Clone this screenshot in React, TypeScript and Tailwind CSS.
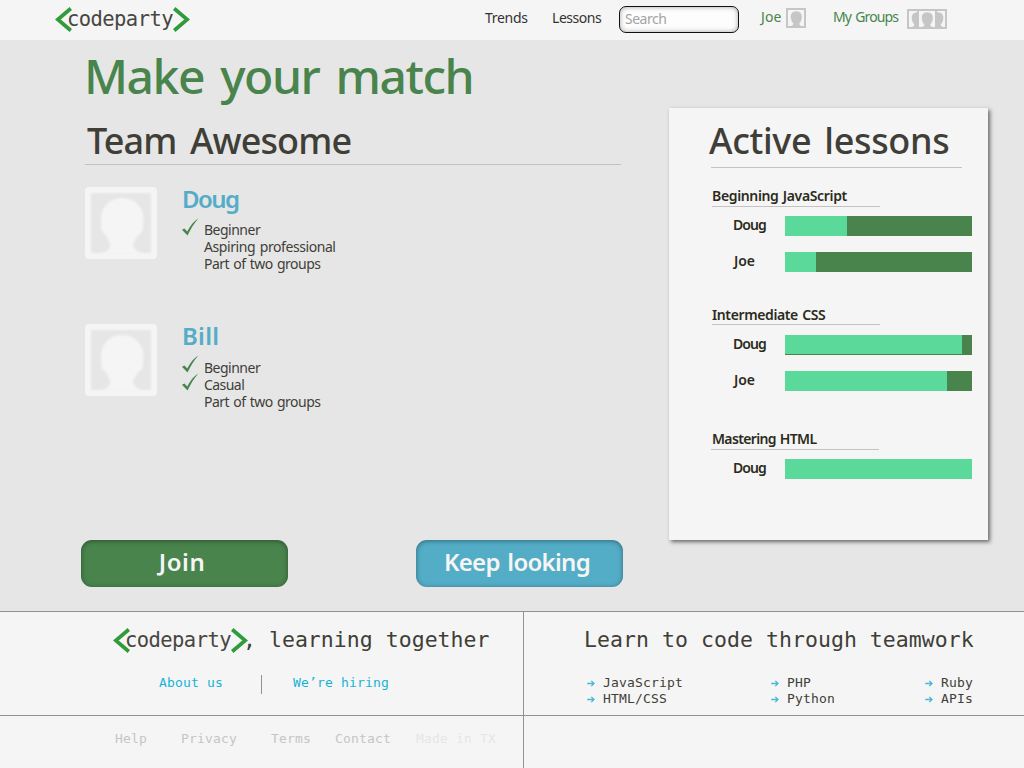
import React from "react";

function Logo() {
  return (
    <div className="flex h-[25px] w-[134px] shrink-0 items-start" aria-label="codeparty">
      <svg className="h-[25px] w-[17px] shrink-0" viewBox="0 0 17 25" fill="none" stroke="#2f9b3a" strokeWidth="3.7">
        <path d="M15.8 1.5 L2.8 12.5 L15.8 23.5" />
      </svg>
      <span className="-ml-[5px] w-[106px] shrink-0 whitespace-nowrap font-['DejaVu_Sans_Mono',monospace] text-[20.5px] leading-[25px] tracking-[-0.57px] text-[#47463f]">
        codeparty
      </span>
      <svg className="h-[25px] w-[17px] shrink-0" viewBox="0 0 17 25" fill="none" stroke="#2f9b3a" strokeWidth="3.7">
        <path d="M1.2 1.5 L14.2 12.5 L1.2 23.5" />
      </svg>
    </div>
  );
}

function Avatar({ id }: { id: string }) {
  return (
    <svg className="mt-1 size-[72px] shrink-0" viewBox="0 0 72 72">
      <defs>
        <filter id={id} x="-10%" y="-10%" width="120%" height="120%">
          <feGaussianBlur stdDeviation="1" />
        </filter>
      </defs>
      <rect width="72" height="72" rx="4" fill="#f5f5f5" />
      <rect x="6" y="6" width="60" height="60" fill="#e6e6e6" filter={`url(#${id})`} />
      <path
        d="M13 67 C21 66 26 62 25 57 C24 54 22 51 21 48 C17 46 15.5 41 16.5 37 C13.5 22 24 11 37 11 C51 11 61 23 58 37 C59 42 57 47 53 48 C52 51 49 54 48 57 C48 62 53 66 60 67 Z"
        fill="#f5f5f5"
        filter={`url(#${id})`}
      />
    </svg>
  );
}

const BUST = "M4.5 18 C6.5 17.6 7.3 16.8 7.3 15.4 C5.8 13.6 5.2 12 5 10.4 C4 6.4 6.2 3.2 10.3 3.2 C14.4 3.2 16.6 6.4 15.7 10.4 C15.5 12 14.8 13.6 13.3 15.4 C13.3 16.8 14.2 17.6 16 18 Z";

function UserIcon() {
  return (
    <svg className="mt-2 size-5 shrink-0" viewBox="0 0 20 20">
      <rect x="1" y="1" width="18" height="18" fill="none" stroke="#c6c6c6" strokeWidth="2" />
      <path d={BUST} fill="#c6c6c6" />
    </svg>
  );
}

function GroupIcon() {
  return (
    <svg className="mt-[9px] h-5 w-10 shrink-0" viewBox="0 0 40 20">
      <path d={BUST} fill="#c6c6c6" />
      <path d={BUST} fill="#c6c6c6" transform="translate(20.5 0)" />
      <rect x="1" y="1" width="38" height="18" fill="none" stroke="#c6c6c6" strokeWidth="2" />
      <rect x="11" y="1" width="18" height="18" fill="#f5f5f5" stroke="#c6c6c6" strokeWidth="2" />
      <path d={BUST} fill="#c6c6c6" transform="translate(10 0)" />
    </svg>
  );
}

function Check({ className }: { className: string }) {
  return (
    <svg className={`h-[18px] w-[17px] ${className}`} viewBox="0 0 17 18">
      <path d="M0 11.8 L2.4 10.4 L5.2 13.6 C8 8 11.5 3.4 16.4 0.2 C12 5.6 8.8 10.4 5.5 17.6 Z" fill="#48844c" />
    </svg>
  );
}

type Trait = { text: string; track: string; check?: string };

function Member({ name, nameTrack, gap, traits, className }: { name: string; nameTrack: string; gap: string; traits: Trait[]; className: string }) {
  return (
    <div className={`flex pl-[85px] ${className}`}>
      <Avatar id={`soft-${name}`} />
      <div className="ml-[25px]">
        <h3 className={`text-[24px] font-semibold leading-8 text-[#53adc6] ${nameTrack}`}>{name}</h3>
        <ul className={`text-[14px] leading-[17px] text-[#3f3e37] ${gap}`}>
          {traits.map((t) => (
            <li key={t.text} className="flex h-[17px]">
              <span className="w-[22px] shrink-0">{t.check && <Check className={t.check} />}</span>
              <span className={`whitespace-nowrap ${t.track}`}>{t.text}</span>
            </li>
          ))}
        </ul>
      </div>
    </div>
  );
}

function Bar({ name, done, className = "", inset = false }: { name: string; done: number; className?: string; inset?: boolean }) {
  return (
    <div className={`flex h-5 ${className}`}>
      <span className={`w-[53px] shrink-0 text-[14px] font-semibold leading-[17px] text-[#2c2b1b] ${name === "Doug" ? "pl-px tracking-[-0.9px]" : "pl-0.5 tracking-[-0.1px]"}`}>{name}</span>
      <div className="h-5 w-[187px] bg-[#48844c]">
        <div className={`bg-[#5ad99b] ${inset ? "h-[19px]" : "h-5"}`} style={{ width: done }} />
      </div>
    </div>
  );
}

const title = "whitespace-nowrap text-[14px] font-semibold leading-[21px] text-[#2c2b1b]";

function TopicColumn({ topics, className }: { topics: string[]; className: string }) {
  return (
    <ul className={className}>
      {topics.map((t) => (
        <li key={t} className="flex h-4 items-center leading-4">
          <svg className="mr-2 mt-px h-[7px] w-[8px] shrink-0" viewBox="0 0 8 7" fill="none" stroke="#45b6d4" strokeWidth="1.3">
            <path d="M0.3 3.5 H6.8 M4.3 0.9 L7 3.5 L4.3 6.1" />
          </svg>
          {t}
        </li>
      ))}
    </ul>
  );
}

export default function App() {
  return (
    <div className="flex h-[768px] w-[1024px] flex-col overflow-hidden bg-[#e6e6e6] font-['Noto_Sans',sans-serif]">
      <header className="flex h-10 shrink-0 items-start bg-[#f5f5f5] pl-[55px] text-[14px] leading-5 text-[#333]">
        <div className="mt-[7px]">
          <Logo />
        </div>
        <nav className="ml-[296px] mt-2 flex">
          <a className="w-[67px] tracking-[-0.3px]">Trends</a>
          <a className="w-[67px] tracking-[-0.45px]">Lessons</a>
        </nav>
        <input
          className="mt-1.5 h-[27px] w-[120px] rounded-[7px] border border-[#111] bg-[#fdfdfd] pb-[3px] pl-[5px] text-[14px] leading-5 tracking-[-0.5px] shadow-[inset_0_0_5px_rgba(0,0,0,0.35)] placeholder:text-[#a3a3a3]"
          placeholder="Search"
        />
        <a className="ml-[22px] mt-[7px] w-[25px] tracking-[0.1px] text-[#48844c]">Joe</a>
        <UserIcon />
        <a className="ml-[27px] mt-[7px] w-[74px] whitespace-nowrap tracking-[-0.9px] [word-spacing:1.5px] text-[#48844c]">My Groups</a>
        <GroupIcon />
      </header>

      <main className="flex h-[571px] shrink-0">
        <div className="w-[669px] shrink-0 pt-[6px]">
          <h1 className="ml-[84px] whitespace-nowrap text-[48px] font-medium leading-[60px] tracking-[-1.45px] text-[#48844c] [word-spacing:5px]">Make your match</h1>
          <h2 className="ml-[85px] mt-[10px] h-[49px] w-[536px] border-b border-[#c3c3c3] pl-[2px] text-[36px] font-medium leading-[50px] tracking-[-0.9px] text-[#3f3e37] [word-spacing:5px]">
            Team Awesome
          </h2>
          <Member
            className="mt-[18px] h-[89px]"
            name="Doug"
            nameTrack="tracking-[-1.6px]"
            gap="mt-1.5"
            traits={[
              { text: "Beginner", track: "tracking-[-0.5px]", check: "-mt-[3px]" },
              { text: "Aspiring professional", track: "tracking-[-0.43px] [word-spacing:1.5px]" },
              { text: "Part of two groups", track: "tracking-[-0.5px] [word-spacing:1px]" },
            ]}
          />
          <Member
            className="mt-[48px] h-[90px]"
            name="Bill"
            nameTrack="tracking-[0.3px]"
            gap="mt-[7px]"
            traits={[
              { text: "Beginner", track: "tracking-[-0.5px]", check: "-mt-[4px]" },
              { text: "Casual", track: "tracking-[-0.55px]", check: "-mt-[3px]" },
              { text: "Part of two groups", track: "tracking-[-0.5px] [word-spacing:1px]" },
            ]}
          />
          <div className="ml-[81px] mt-[130px] flex gap-[128px] text-[24px] font-semibold leading-[44px] text-[#f5f5f5]">
            <button className="h-[47px] w-[207px] rounded-[11px] bg-[#48844c] pb-[3px] pr-[5px] tracking-[0.6px] shadow-[inset_0_1px_5px_rgba(0,0,0,0.4)]">Join</button>
            <button className="h-[47px] w-[207px] rounded-[11px] bg-[#53adc6] pb-[3px] pr-[5px] tracking-[-0.7px] shadow-[inset_0_1px_5px_rgba(0,0,0,0.4)] [word-spacing:2px]">Keep looking</button>
          </div>
        </div>

        <aside className="mt-[68px] h-[432px] w-[319px] shrink-0 bg-[#f5f5f5] pl-[42px] pt-2 shadow-[2px_2px_4px_rgba(0,0,0,0.55)]">
          <h2 className="-ml-[2px] h-12 whitespace-nowrap text-[36px] font-medium leading-[50px] tracking-[-0.35px] text-[#3f3e37] [word-spacing:4px]">Active lessons</h2>
          <div className="mt-[3px] w-[251px] border-b border-[#c3c3c3]" />

          <section className="mt-[17px]">
            <div className="ml-px h-[22px] w-[168px] border-b border-[#c3c3c3]">
              <h4 className={`${title} tracking-[-0.35px] [word-spacing:1px]`}>Beginning JavaScript</h4>
            </div>
            <Bar className="ml-[21px] mt-[9px]" name="Doug" done={62} />
            <Bar className="ml-[21px] mt-4" name="Joe" done={31} />
          </section>

          <section className="mt-8">
            <div className="ml-px h-[21px] w-[168px] border-b border-[#c3c3c3]">
              <h4 className={`${title} tracking-[-0.38px] [word-spacing:1px]`}>Intermediate CSS</h4>
            </div>
            <Bar className="ml-[21px] mt-2.5" name="Doug" done={177} inset />
            <Bar className="ml-[21px] mt-4" name="Joe" done={162} />
          </section>

          <section className="mt-[37px]">
            <div className="h-[22px] w-[168px] border-b border-[#c3c3c3]">
              <h4 className={`${title} ml-px tracking-[-0.65px] [word-spacing:1px]`}>Mastering HTML</h4>
            </div>
            <Bar className="ml-[21px] mt-[9px]" name="Doug" done={187} />
          </section>
        </aside>
      </main>

      <footer className="flex h-[157px] shrink-0 border-t border-[#929292] bg-[#f5f5f5] font-['DejaVu_Sans_Mono',monospace] text-[13px] tracking-[0.17px] text-[#3f3e37]">
        <div className="flex w-[524px] shrink-0 flex-col border-r border-[#929292]">
          <div className="h-[104px] border-b border-[#929292] pt-3">
            <div className="flex h-[30px] pl-[113px]">
              <div className="mt-1">
                <Logo />
              </div>
              <span className="-ml-[4px] whitespace-pre text-[21.5px] leading-[32px] tracking-[0.03px]">, learning together</span>
            </div>
            <div className="mt-[21px] flex h-[18px] pl-[159px] leading-4 text-[#16b3d6]">
              <a className="w-[102px]">About us</a>
              <span className="h-[19px] w-px bg-[#929292]" />
              <a className="ml-[31px]">We’re hiring</a>
            </div>
          </div>
          <div className="flex pl-[115px] pt-[15px] leading-4 text-[#c5c5c5]">
            <a className="w-[66px]">Help</a>
            <a className="w-[90px]">Privacy</a>
            <a className="w-16">Terms</a>
            <a className="w-[81px]">Contact</a>
            <span className="whitespace-nowrap text-[#e6e6e6]">Made in TX</span>
          </div>
        </div>
        <div className="w-[500px] shrink-0">
          <div className="h-[104px] border-b border-[#929292] pt-3">
            <h5 className="h-[30px] whitespace-nowrap pl-[60px] text-[21.5px] leading-[32px] tracking-[0.05px]">Learn to code through teamwork</h5>
            <div className="mt-[21px] flex pl-[63px]">
              <TopicColumn className="w-[184px]" topics={["JavaScript", "HTML/CSS"]} />
              <TopicColumn className="w-[154px]" topics={["PHP", "Python"]} />
              <TopicColumn className="w-[64px]" topics={["Ruby", "APIs"]} />
            </div>
          </div>
        </div>
      </footer>
    </div>
  );
}
